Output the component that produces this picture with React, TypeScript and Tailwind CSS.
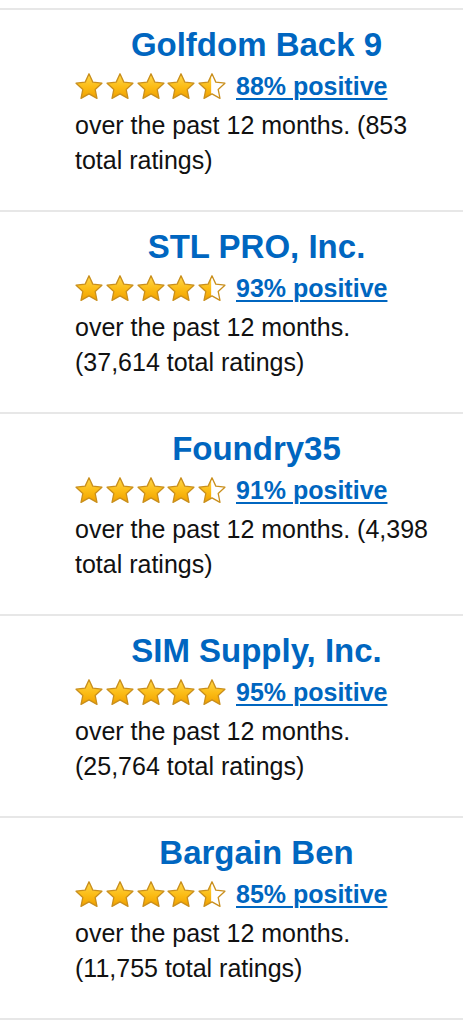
import { useId } from "react";

type Seller = {
  name: string;
  stars: number;
  positive: string;
  ratings: string;
};

const sellers: Seller[] = [
  { name: "Golfdom Back 9", stars: 4.5, positive: "88% positive", ratings: "853" },
  { name: "STL PRO, Inc.", stars: 4.5, positive: "93% positive", ratings: "37,614" },
  { name: "Foundry35", stars: 4.5, positive: "91% positive", ratings: "4,398" },
  { name: "SIM Supply, Inc.", stars: 5, positive: "95% positive", ratings: "25,764" },
  { name: "Bargain Ben", stars: 4.5, positive: "85% positive", ratings: "11,755" },
];

// five point star, a bit rounder than a regular one
function starPoints(cx: number, cy: number, R: number, r: number) {
  const pts: string[] = [];
  for (let i = 0; i < 10; i++) {
    const rad = i % 2 === 0 ? R : r;
    const a = (Math.PI / 5) * i - Math.PI / 2;
    pts.push(`${(cx + rad * Math.cos(a)).toFixed(2)},${(cy + rad * Math.sin(a)).toFixed(2)}`);
  }
  return pts.join(" ");
}

const POINTS = starPoints(14, 14.4, 13.6, 6.5);

function Star({ fill }: { fill: number }) {
  const id = useId().replace(/:/g, "");
  return (
    <svg width="28" height="27" viewBox="0 0 28 27" className="block shrink-0">
      <defs>
        <linearGradient id={`g${id}`} x1="0" y1="0" x2="0" y2="1">
          <stop offset="0" stopColor="#ffd84a" />
          <stop offset="0.55" stopColor="#fbbb14" />
          <stop offset="1" stopColor="#f0a000" />
        </linearGradient>
        <clipPath id={`c${id}`}>
          <rect x="0" y="0" width={28 * fill} height="27" />
        </clipPath>
      </defs>
      <polygon points={POINTS} fill="#ffffff" />
      <polygon points={POINTS} fill={`url(#g${id})`} clipPath={`url(#c${id})`} />
      <polygon points={POINTS} fill="none" stroke="#c98f1d" strokeWidth="1.3" strokeLinejoin="round" />
    </svg>
  );
}

function Stars({ value }: { value: number }) {
  return (
    <div className="flex items-center gap-[2.75px]">
      {[0, 1, 2, 3, 4].map((i) => {
        const f = Math.max(0, Math.min(1, value - i));
        return <Star key={i} fill={f === 1 ? 1 : f > 0 ? 0.47 : 0} />;
      })}
    </div>
  );
}

function SellerRow({ seller }: { seller: Seller }) {
  return (
    <div className="border-t-2 border-[#e7e7e7] pl-[75px] pr-[25px] pt-[16px] pb-[32px]">
      <h2 className="text-center text-[33px] leading-[38px] font-bold text-[#0066c0]">
        {seller.name}
      </h2>
      <div className="mt-[7px] flex items-center gap-[10px] h-[30px]">
        <Stars value={seller.stars} />
        <a
          href="#"
          className="text-[25px] leading-[30px] font-bold text-[#0066c0] underline decoration-2 underline-offset-[3px]"
        >
          {seller.positive}
        </a>
      </div>
      <p className="mt-[7px] text-[25px] leading-[35px] text-[#111111]">
        over the past 12 months. ({seller.ratings} total ratings)
      </p>
    </div>
  );
}

export default function App() {
  return (
    <div
      className="w-[463px] min-h-[1024px] bg-white pt-[8px]"
      style={{ fontFamily: '"Liberation Sans", Arial, sans-serif' }}
    >
      {sellers.map((s) => (
        <SellerRow key={s.name} seller={s} />
      ))}
      <div className="border-t-2 border-[#e7e7e7]" />
    </div>
  );
}
